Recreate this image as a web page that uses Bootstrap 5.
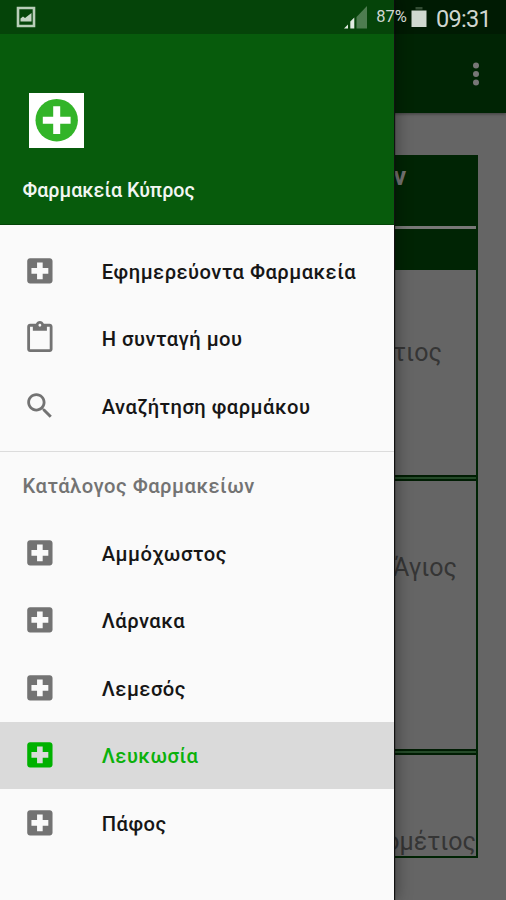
<!DOCTYPE html>
<html lang="el">
<head>
<meta charset="utf-8">
<meta name="viewport" content="width=device-width, initial-scale=1">
<title>Φαρμακεία Κύπρος</title>
<link href="https://cdn.jsdelivr.net/npm/bootstrap@5.3.0/dist/css/bootstrap.min.css" rel="stylesheet">
<style>
  body { font-family: Roboto, "Noto Sans", sans-serif; background: #656565; }
  .screen { width: 506px; height: 900px; background: #656565; }
  .appbar { height: 113px; background: #002404; padding: 34px 24px 0 0; box-shadow: 0 1px 3px rgba(0,0,0,.4); }
  .pharmacies { margin: 42px 28px 0 340px; color: #353535; font-size: 25px; line-height: 30px; background: #002404; height: 703px; padding-right: 2px; }
  .pharmacies .title { height: 71px; padding: 7px 0 0 53.5px; color: #747474; font-weight: 700; }
  .pharmacies .rule { height: 3px; background: #787878; }
  .pharmacies .sub { height: 41px; }
  .entry { background: #656565; padding-left: 53px; }
  .entry-a { height: 205px; padding-top: 68px; }
  .entry-b { height: 268px; padding-top: 72px; }
  .entry-c { height: 101px; padding: 72px 0 0; }
  .gap-line { height: 6px; border: solid #001d03; border-width: 2px 0; background: #254a29; }
  .drawer { width: 394px; background: #fafafa; z-index: 2; box-shadow: 1px 0 1px #111, 3px 0 14px rgba(0,0,0,.35); }
  .drawer-head { height: 225px; background: #075b0c; padding: 92.5px 0 0 22.5px; border-bottom: 1px solid #044408; }
  .logo { margin-left: 6.5px; width: 55px; height: 55px; }
  .app-name { margin-top: 30px; color: #f2f6f2; font-size: 19.7px; line-height: 26px; font-weight: 500; }
  .menu { padding-top: 12px; }
  .menu-row { height: 67.5px; padding-left: 22.5px; font-size: 20.2px; letter-spacing: .46px; font-weight: 500; color: #161616; white-space: nowrap; }
  .menu-row span { padding-top: 2px; }
  .menu-row svg { width: 33.75px; height: 33.75px; margin-right: 45.5px; fill: #737373; }
  .menu-row.current { background: #dadada; color: #0bb10b; }
  .menu-row.current svg { fill: #00b100; }
  .menu-split { border-top: 1.5px solid #dcdcdc; margin-top: 11.5px; }
  .menu-label { height: 67px; padding: 2px 0 0 22.5px; font-size: 20.2px; letter-spacing: .5px; font-weight: 500; color: #737373; }
  .status { height: 34px; background: rgba(0,0,0,.25); z-index: 3; color: #d0d6d0; padding: 0 15px 0 16px; }
  .pct { font-size: 16.5px; margin: 1px 4px 0 8px; }
  .clock { font-size: 23.5px; letter-spacing: -.7px; margin: 3px 0 0 9px; line-height: 34px; }
</style>
<script src="https://cdn.jsdelivr.net/npm/bootstrap@5.3.0/dist/js/bootstrap.bundle.min.js"></script>
</head>
<body>
<svg class="d-none">
  <symbol id="cross" viewBox="0 0 24 24"><path d="M19 3H5c-1.1 0-2 .9-2 2v14c0 1.1.9 2 2 2h14c1.1 0 2-.9 2-2V5c0-1.1-.9-2-2-2zm-1 11h-4v4h-4v-4H6v-4h4V6h4v4h4v4z"/></symbol>
</svg>
<div class="screen position-relative overflow-hidden">
  <header class="appbar d-flex justify-content-end align-items-center">
    <svg width="12" height="26" viewBox="0 0 12 26" fill="#777"><circle cx="6" cy="4.500" r="3"/><circle cx="6" cy="13" r="3"/><circle cx="6" cy="21.500" r="3"/></svg>
  </header>
  <main class="pharmacies">
    <div class="title">ν</div>
    <div class="rule"></div>
    <div class="sub"></div>
    <div class="entry entry-a">τιος</div>
    <div class="gap-line"></div>
    <div class="entry entry-b">Άγιος</div>
    <div class="gap-line"></div>
    <div class="entry entry-c text-end">ομέτιος</div>
  </main>

  <aside class="drawer position-absolute top-0 start-0 h-100">
    <div class="drawer-head">
      <svg class="logo d-block" viewBox="0 0 55 55"><rect width="55" height="55" fill="#fff"/><circle cx="27.700" cy="27.200" r="21.200" fill="#32b428"/><path d="M24.200 13.300h7v10.400h10.400v7H31.200v10.400h-7V30.700H13.800v-7h10.400z" fill="#fff"/></svg>
      <div class="app-name">Φαρμακεία Κύπρος</div>
    </div>
    <nav class="menu">
      <div class="menu-row d-flex align-items-center"><svg><use href="#cross"/></svg><span>Εφημερεύοντα Φαρμακεία</span></div>
      <div class="menu-row d-flex align-items-center"><svg viewBox="0 0 24 24"><path d="M19 2h-4.180C14.400.840 13.300 0 12 0c-1.300 0-2.400.840-2.820 2H5c-1.100 0-2 .9-2 2v16c0 1.100.9 2 2 2h14c1.100 0 2-.9 2-2V4c0-1.100-.9-2-2-2zm-7 0c.550 0 1 .450 1 1s-.450 1-1 1-1-.450-1-1 .450-1 1-1zm7 18H5V4h2v3h10V4h2v16z"/></svg><span>Η συνταγή μου</span></div>
      <div class="menu-row d-flex align-items-center"><svg viewBox="0 0 24 24"><path d="M15.500 14h-.790l-.280-.270C15.410 12.590 16 11.110 16 9.500 16 5.910 13.090 3 9.500 3S3 5.910 3 9.500 5.910 16 9.500 16c1.610 0 3.090-.590 4.230-1.570l.270.280v.790l5 4.990L20.490 19l-4.990-5zm-6 0C7.010 14 5 11.990 5 9.500S7.010 5 9.500 5 14 7.010 14 9.500 11.990 14 9.500 14z"/></svg><span>Αναζήτηση φαρμάκου</span></div>
      <div class="menu-split"></div>
      <div class="menu-label d-flex align-items-center">Κατάλογος Φαρμακείων</div>
      <div class="menu-row d-flex align-items-center"><svg><use href="#cross"/></svg><span>Αμμόχωστος</span></div>
      <div class="menu-row d-flex align-items-center"><svg><use href="#cross"/></svg><span>Λάρνακα</span></div>
      <div class="menu-row d-flex align-items-center"><svg><use href="#cross"/></svg><span>Λεμεσός</span></div>
      <div class="menu-row current d-flex align-items-center"><svg><use href="#cross"/></svg><span>Λευκωσία</span></div>
      <div class="menu-row d-flex align-items-center"><svg><use href="#cross"/></svg><span>Πάφος</span></div>
    </nav>
  </aside>

  <div class="status position-absolute top-0 start-0 w-100 d-flex align-items-center">
    <svg class="me-auto" width="20" height="22" viewBox="0 0 20 22"><path d="M2 2h16v18H2z" fill="none" stroke="#b9ceb9" stroke-width="2.600"/><path d="M4.500 15.500v-3l2.500-2 2 1.500 6.500-5v8.500z" fill="#c4d4c4"/></svg>
    <svg width="25" height="23" viewBox="0 0 25 23"><path d="M1 22.500l4-4v4zM7.300 22.500v-7l4-4v11z" fill="#e2ebe2"/><path d="M13.500 22.500V11L24 0v22.500z" fill="#4e7c50"/></svg>
    <span class="pct">87%</span>
    <svg width="16" height="22" viewBox="0 0 16 22"><path d="M4.500 1h7v2.500h-7z" fill="#344d35"/><path d="M.5 4.500h15V21H.5z" fill="#d0d8d0"/></svg>
    <span class="clock">09:31</span>
  </div>
</div>
</body>
</html>
